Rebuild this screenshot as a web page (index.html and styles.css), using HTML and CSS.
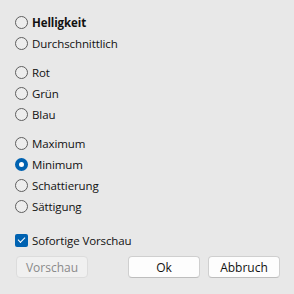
FILE: index.html
```html
<!DOCTYPE html>
<html lang="de">
<head>
  <meta charset="UTF-8">
  <title>Graustufen</title>
  <link rel="stylesheet" href="styles.css">
</head>
<body>
  <form class="dialog">
    <div class="group">
      <label class="option"><input type="radio" name="mode"><b>Helligkeit</b></label>
      <label class="option"><input type="radio" name="mode">Durchschnittlich</label>
    </div>
    <div class="group">
      <label class="option"><input type="radio" name="mode">Rot</label>
      <label class="option"><input type="radio" name="mode">Grün</label>
      <label class="option"><input type="radio" name="mode">Blau</label>
    </div>
    <div class="group">
      <label class="option"><input type="radio" name="mode">Maximum</label>
      <label class="option"><input type="radio" name="mode" checked>Minimum</label>
      <label class="option"><input type="radio" name="mode">Schattierung</label>
      <label class="option"><input type="radio" name="mode">Sättigung</label>
    </div>
    <label class="option check"><input type="checkbox" checked>Sofortige Vorschau</label>
    <div class="buttons">
      <button type="button" class="btn" disabled>Vorschau</button>
      <span class="spacer"></span>
      <button type="button" class="btn">Ok</button>
      <button type="button" class="btn">Abbruch</button>
    </div>
  </form>
</body>
</html>
```

FILE: styles.css
```css
body {
  margin: 0;
  background: #e8e8e8;
  font-family: "Open Sans", "Noto Sans", sans-serif;
  font-size: 11.5px;
  letter-spacing: -0.1px;
  color: #111;
}
.dialog {
  padding: 12px 14px 0 15px;
  display: flex;
  flex-direction: column;
}
.group {
  display: flex;
  flex-direction: column;
  margin-bottom: 8px;
}
.option {
  display: flex;
  align-items: center;
  height: 21px;
  gap: 4px;
}
.option b {
  font-weight: 700;
}
input[type="radio"] {
  appearance: none;
  margin: 0;
  width: 13px;
  height: 13px;
  border: 1px solid #5e5e5e;
  border-radius: 50%;
  background: #ededed;
  box-sizing: border-box;
}
input[type="radio"]:checked {
  border: 4px solid #0062b1;
  background: #fff;
}
input[type="checkbox"] {
  appearance: none;
  margin: 0;
  width: 13px;
  height: 13px;
  border-radius: 2px;
  background: #0062b1;
  position: relative;
}
input[type="checkbox"]::after {
  content: "";
  position: absolute;
  left: 3px;
  top: 3px;
  width: 6px;
  height: 3px;
  border-left: 1px solid #fff;
  border-bottom: 1px solid #fff;
  transform: rotate(-45deg);
}
.check {
  margin-top: 2px;
  height: 26px;
}
.buttons {
  display: flex;
  gap: 8px;
  margin-top: 3px;
  padding-left: 1px;
}
.spacer {
  flex: 1;
}
.btn {
  width: 72px;
  height: 22px;
  padding: 0;
  font-family: inherit;
  font-size: 12px;
  color: #111;
  background: #fdfdfd;
  border: 1px solid #cfcfcf;
  border-bottom-color: #bdbdbd;
  border-radius: 4px;
}
.btn:disabled {
  background: #f0f0f0;
  color: #8a8a8a;
  border-color: #dcdcdc;
}
```
